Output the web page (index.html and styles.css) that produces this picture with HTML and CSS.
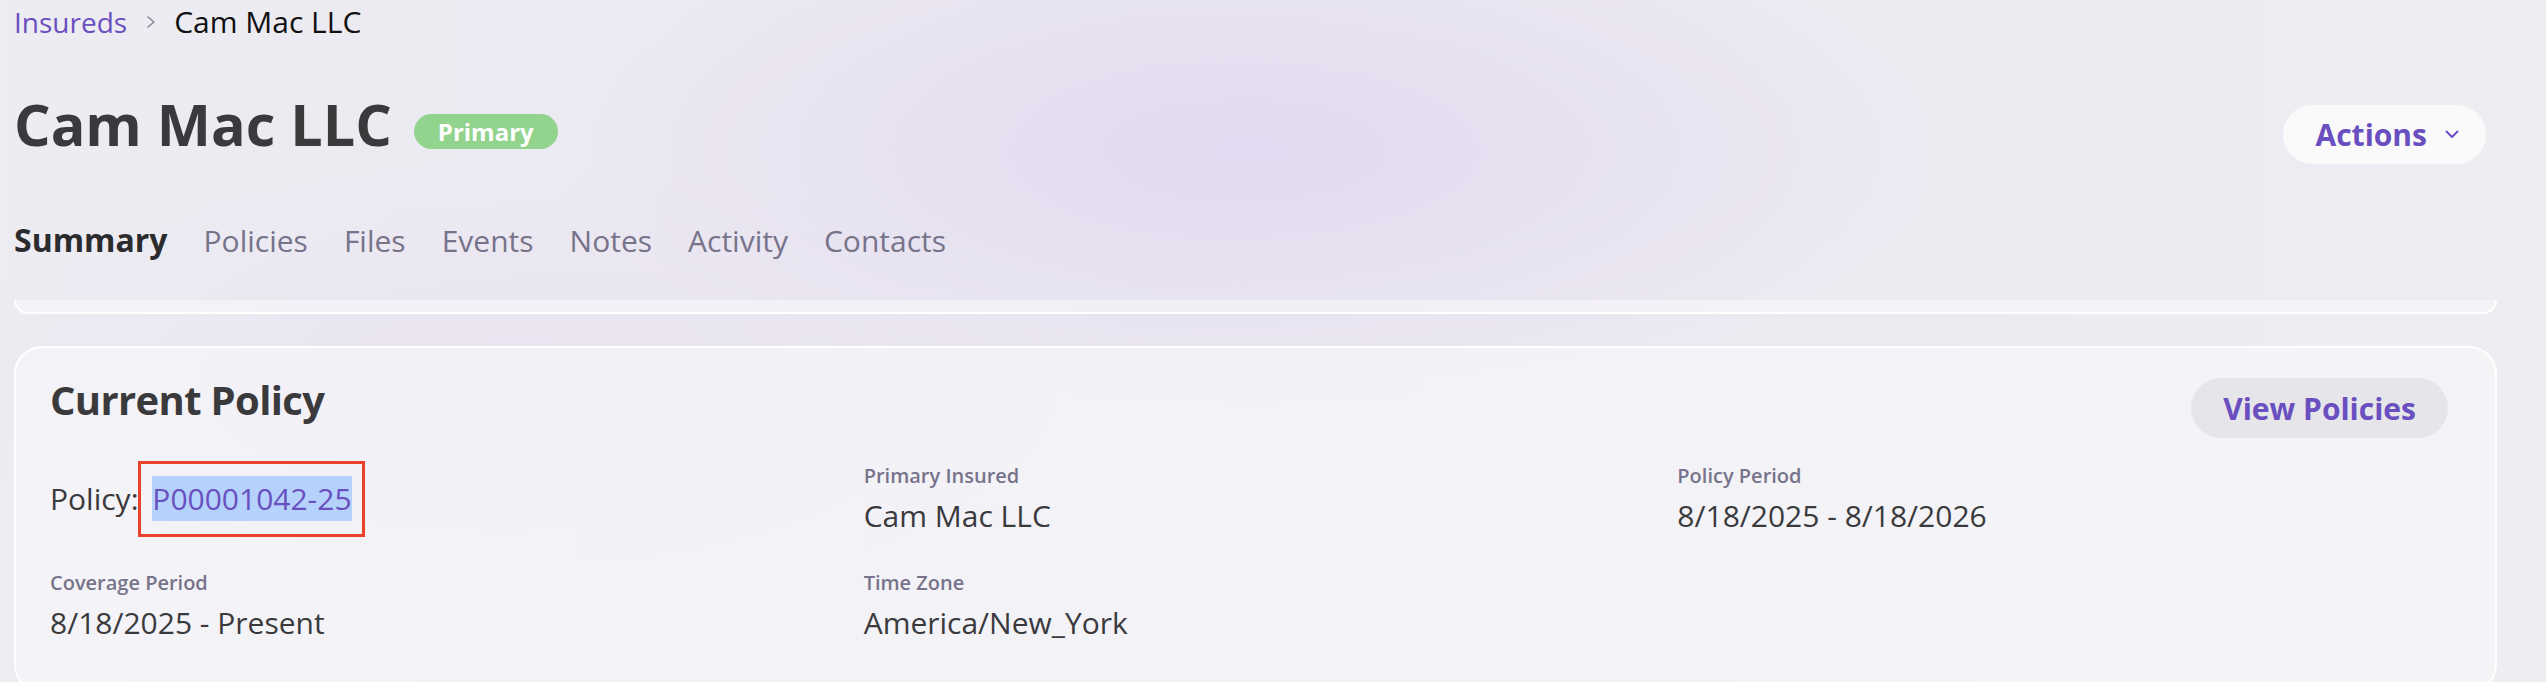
FILE: index.html
```html
<!DOCTYPE html>
<html lang="en">
<head>
<meta charset="utf-8">
<title>Cam Mac LLC</title>
<link rel="stylesheet" href="styles.css">
</head>
<body>
<div class="page">
  <nav class="crumbs">
    <a class="crumb-link" href="#">Insureds</a>
    <svg class="crumb-sep" width="10" height="16" viewBox="0 0 10 16"><polyline points="2,3 8,8 2,13" fill="none" stroke="#8c8898" stroke-width="1.6" stroke-linecap="round" stroke-linejoin="round"/></svg>
    <span class="crumb-current">Cam Mac LLC</span>
  </nav>

  <header class="head">
    <div class="title-group">
      <h1 class="title">Cam Mac LLC</h1>
      <span class="badge">Primary</span>
    </div>
    <button class="actions" type="button">Actions
      <svg class="chev" width="14" height="9" viewBox="0 0 14 9"><polyline points="1.5,1.5 7,7 12.5,1.5" fill="none" stroke="#6a4fc0" stroke-width="2" stroke-linecap="round" stroke-linejoin="round"/></svg>
    </button>
  </header>

  <nav class="tabs">
    <a class="tab tab-active" href="#">Summary</a>
    <a class="tab" href="#">Policies</a>
    <a class="tab" href="#">Files</a>
    <a class="tab" href="#">Events</a>
    <a class="tab" href="#">Notes</a>
    <a class="tab" href="#">Activity</a>
    <a class="tab" href="#">Contacts</a>
  </nav>

  <div class="scroll">
    <div class="card card-tail"></div>
    <section class="card policy-card">
      <div class="card-head">
        <h2 class="card-title">Current Policy</h2>
        <button class="btn-soft" type="button">View Policies</button>
      </div>
      <div class="fields">
        <div class="field field-policy">
          <span class="policy-label">Policy:</span>
          <a class="policy-link" href="#">P00001042-25<span class="annot"></span></a>
        </div>
        <div class="field">
          <div class="label">Primary Insured</div>
          <div class="value">Cam Mac LLC</div>
        </div>
        <div class="field">
          <div class="label">Policy Period</div>
          <div class="value">8/18/2025 - 8/18/2026</div>
        </div>
        <div class="field">
          <div class="label">Coverage Period</div>
          <div class="value">8/18/2025 - Present</div>
        </div>
        <div class="field">
          <div class="label">Time Zone</div>
          <div class="value">America/New_York</div>
        </div>
      </div>
    </section>
  </div>
</div>
</body>
</html>
```

FILE: styles.css
```css
html, body {
  margin: 0;
  padding: 0;
  height: 100%;
  overflow: hidden;
}

body {
  font-family: "Open Sans", "Noto Sans", "Liberation Sans", sans-serif;
  color: #3a3a3d;
  background:
    radial-gradient(ellipse 1000px 360px at 1250px 150px, rgba(222, 212, 240, 0.7), rgba(222, 212, 240, 0) 70%),
    radial-gradient(ellipse 800px 320px at 500px 380px, rgba(230, 222, 242, 0.5), rgba(230, 222, 242, 0) 70%),
    linear-gradient(90deg, #edecf2 0%, #ebe8f1 45%, #eeedf2 100%);
}

.page {
  padding: 2px 49px 0 14px;
}

/* breadcrumbs */
.crumbs {
  display: flex;
  align-items: center;
  height: 40px;
  line-height: 40px;
}
.crumb-link {
  font-size: 28px;
  color: #6a4fc0;
  text-decoration: none;
}
.crumb-sep {
  margin: 0 18px 0 19px;
}
.crumb-current {
  font-size: 30px;
  color: #111;
}

/* header */
.head {
  display: flex;
  justify-content: space-between;
  align-items: flex-start;
  margin-top: 49px;
  padding-right: 11px;
}
.title-group {
  display: flex;
  align-items: flex-start;
  gap: 22px;
}
.title {
  margin: 0;
  font-size: 57.5px;
  line-height: 67px;
  font-weight: 700;
  color: #3a3a3d;
}
.badge {
  margin-top: 23px;
  height: 35px;
  line-height: 35px;
  padding: 0 24px;
  border-radius: 18px;
  background: #92d38e;
  color: #fff;
  font-size: 24px;
  font-weight: 700;
}
.actions {
  margin-top: 14px;
  display: flex;
  align-items: center;
  gap: 18px;
  height: 59px;
  padding: 0 27px 0 32px;
  border: none;
  border-radius: 30px;
  background: #fafafb;
  color: #6a4fc0;
  font-family: inherit;
  font-size: 30px;
  font-weight: 700;
}

/* tabs */
.tabs {
  display: flex;
  align-items: baseline;
  gap: 36px;
  margin-top: 54px;
  height: 44px;
  line-height: 44px;
}
.tab {
  font-size: 30px;
  color: #77738a;
  text-decoration: none;
}
.tab-active {
  font-size: 32px;
  font-weight: 700;
  color: #2b2b2e;
}

/* scroll area with cards */
.scroll {
  margin-top: 38px;
  display: flex;
  flex-direction: column;
  gap: 32px;
}
.card {
  border: 2px solid rgba(255, 255, 255, 0.95);
  border-radius: 28px;
  background: rgba(250, 249, 252, 0.55);
}
.card-tail {
  height: 12px;
  border-top: none;
  border-top-left-radius: 0;
  border-top-right-radius: 0;
}
.policy-card {
  padding: 30px 47px 48px 34px;
}
.card-head {
  display: flex;
  justify-content: space-between;
  align-items: flex-start;
}
.card-title {
  margin: 0;
  font-size: 40px;
  line-height: 44px;
  font-weight: 700;
  color: #3a3a3d;
  letter-spacing: -0.65px;
}
.btn-soft {
  height: 60px;
  padding: 0 32px;
  border: none;
  border-radius: 30px;
  background: #e6e5ea;
  color: #6a4fc0;
  font-family: inherit;
  font-size: 30px;
  font-weight: 700;
}

.fields {
  margin-top: 24px;
  display: grid;
  grid-template-columns: repeat(3, 1fr);
  column-gap: 43px;
  row-gap: 33px;
  align-items: center;
}
.label {
  font-size: 20px;
  line-height: 28px;
  font-weight: 600;
  color: #77738a;
}
.value {
  margin-top: 6px;
  font-size: 30px;
  line-height: 40px;
  color: #3a3a3d;
}
.field-policy {
  font-size: 30px;
  line-height: 40px;
  color: #3a3a3d;
}
.policy-link {
  position: relative;
  margin-left: 6px;
  color: #6a4fc0;
  text-decoration: none;
  background: #b4d2fb;
  padding: 2px 0;
}
.annot {
  position: absolute;
  top: -15px;
  bottom: -16px;
  left: -14px;
  right: -13px;
  border: 3px solid #e8432a;
}
```
